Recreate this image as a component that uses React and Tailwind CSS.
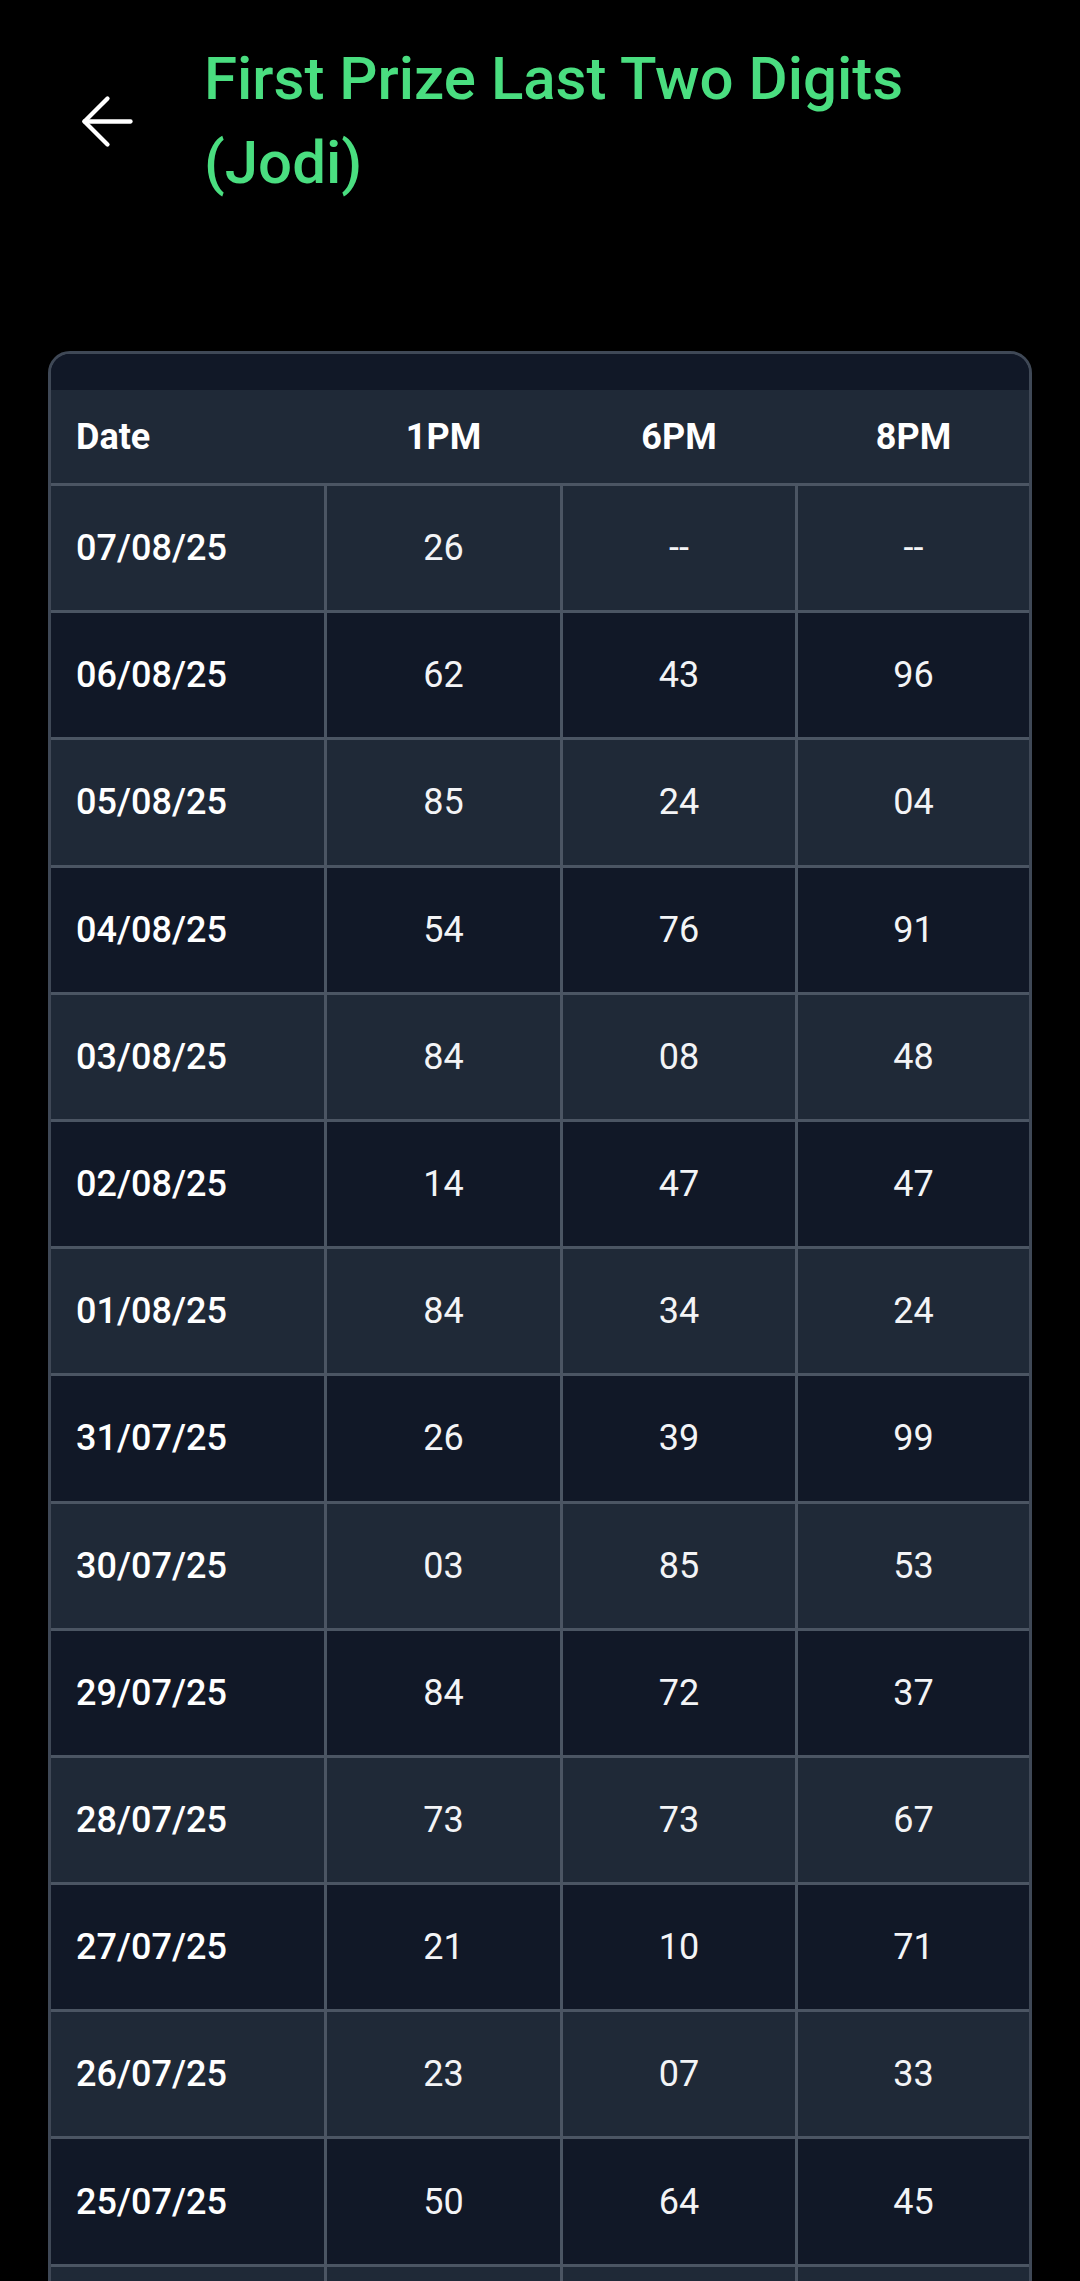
import React from 'react';

const rows = [
  ['07/08/25', '26', '--', '--'],
  ['06/08/25', '62', '43', '96'],
  ['05/08/25', '85', '24', '04'],
  ['04/08/25', '54', '76', '91'],
  ['03/08/25', '84', '08', '48'],
  ['02/08/25', '14', '47', '47'],
  ['01/08/25', '84', '34', '24'],
  ['31/07/25', '26', '39', '99'],
  ['30/07/25', '03', '85', '53'],
  ['29/07/25', '84', '72', '37'],
  ['28/07/25', '73', '73', '67'],
  ['27/07/25', '21', '10', '71'],
  ['26/07/25', '23', '07', '33'],
  ['25/07/25', '50', '64', '45'],
  // next row only peeks in at the bottom edge, its text is below the fold
  ['', '', '', ''],
];

const BackArrow = () => (
  <svg
    viewBox="0 0 24 24"
    className="w-[79px] h-[79px] shrink-0"
    fill="none"
    stroke="white"
    strokeWidth="1.3"
    strokeLinecap="round"
    strokeLinejoin="round"
  >
    <path d="m12 19-7-7 7-7" />
    <path d="M19 12H5" />
  </svg>
);

const App = () => {
  return (
    <div
      className="bg-black w-[1080px] h-[2281px] overflow-hidden"
      style={{ fontFamily: 'Roboto, "Noto Sans", sans-serif' }}
    >
      {/* Header */}
      <div className="flex items-center pl-[68px] pt-[37px]">
        <BackArrow />
        <h1 className="ml-[57px] text-[60px] leading-[84px] font-medium text-[#4ade80]">
          First Prize Last Two Digits
          <br />
          (Jodi)
        </h1>
      </div>

      {/* Table */}
      <div className="mt-[146px] mx-[48px] border-[3px] border-[#3f4856] rounded-[22px] overflow-hidden bg-[#111827]">
        <div className="h-[36px] bg-[#111827]" />
        <div className="grid grid-cols-[273px_236px_235px_234px] h-[96px] bg-[#1f2937] border-b-[3px] border-[#4b5563] text-[36px] font-bold text-white">
          <div className="flex items-center pl-[25px]">Date</div>
          <div className="flex items-center justify-center pl-[3px]">1PM</div>
          <div className="flex items-center justify-center pl-[3px]">6PM</div>
          <div className="flex items-center justify-center pl-[3px]">8PM</div>
        </div>
        {rows.map((r, i) => (
          <div
            key={i}
            className={
              'grid grid-cols-[273px_236px_235px_234px] h-[127.2px] border-b-[3px] border-[#4b5563] text-[36px] text-[#f3f4f6] ' +
              (i % 2 === 0 ? 'bg-[#1f2937]' : 'bg-[#111827]')
            }
          >
            <div className="flex items-center pl-[25px] font-medium text-white">{r[0]}</div>
            <div className="flex items-center justify-center border-l-[3px] border-[#4b5563]">{r[1]}</div>
            <div className="flex items-center justify-center border-l-[3px] border-[#4b5563]">{r[2]}</div>
            <div className="flex items-center justify-center border-l-[3px] border-[#4b5563]">{r[3]}</div>
          </div>
        ))}
      </div>
    </div>
  );
};

export default App;
